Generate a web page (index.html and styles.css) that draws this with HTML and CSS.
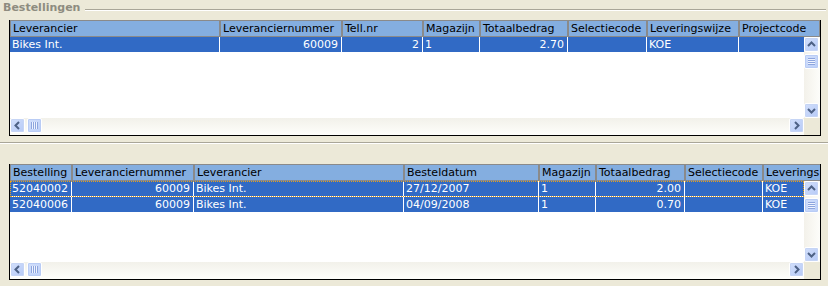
FILE: index.html
```html
<!DOCTYPE html>
<html lang="nl">
<head>
    <meta charset="UTF-8">
    <title>Bestellingen</title>
    <link rel="stylesheet" href="styles.css">
</head>
<body>
    <div class="group-title">
        <span>Bestellingen</span>
        <i class="rule"></i>
    </div>

    <div class="grid grid-top">
        <div class="head">
            <div class="hc">Leverancier</div>
            <div class="hc">Leveranciernummer</div>
            <div class="hc">Tell.nr</div>
            <div class="hc">Magazijn</div>
            <div class="hc">Totaalbedrag</div>
            <div class="hc">Selectiecode</div>
            <div class="hc">Leveringswijze</div>
            <div class="hc">Projectcode</div>
        </div>
        <div class="body">
            <div class="rows">
                <div class="row sel">
                    <div class="c">Bikes Int.</div>
                    <div class="c num">60009</div>
                    <div class="c num">2</div>
                    <div class="c">1</div>
                    <div class="c num">2.70</div>
                    <div class="c"></div>
                    <div class="c">KOE</div>
                    <div class="c"></div>
                </div>
            </div>
            <div class="vscroll">
                <div class="sbtn"><svg width="15" height="15"><polyline points="4,9 7.5,5.5 11,9" /></svg></div>
                <div class="vthumb"><i></i></div>
                <div class="fill"></div>
                <div class="sbtn"><svg width="15" height="15"><polyline points="4,6 7.5,9.5 11,6" /></svg></div>
            </div>
            <div class="hscroll">
                <div class="sbtn"><svg width="15" height="15"><polyline points="9,4 5.5,7.5 9,11" /></svg></div>
                <div class="hthumb"><i></i></div>
                <div class="fill"></div>
                <div class="sbtn"><svg width="15" height="15"><polyline points="6,4 9.5,7.5 6,11" /></svg></div>
            </div>
            <div class="corner"></div>
        </div>
    </div>

    <div class="split"></div>

    <div class="grid grid-bottom">
        <div class="head">
            <div class="hc">Bestelling</div>
            <div class="hc">Leveranciernummer</div>
            <div class="hc">Leverancier</div>
            <div class="hc">Besteldatum</div>
            <div class="hc">Magazijn</div>
            <div class="hc">Totaalbedrag</div>
            <div class="hc">Selectiecode</div>
            <div class="hc">Leverings</div>
        </div>
        <div class="body">
            <div class="rows">
                <div class="row sel focus">
                    <div class="c">52040002</div>
                    <div class="c num">60009</div>
                    <div class="c">Bikes Int.</div>
                    <div class="c">27/12/2007</div>
                    <div class="c">1</div>
                    <div class="c num">2.00</div>
                    <div class="c"></div>
                    <div class="c">KOE</div>
                </div>
                <div class="row sel">
                    <div class="c">52040006</div>
                    <div class="c num">60009</div>
                    <div class="c">Bikes Int.</div>
                    <div class="c">04/09/2008</div>
                    <div class="c">1</div>
                    <div class="c num">0.70</div>
                    <div class="c"></div>
                    <div class="c">KOE</div>
                </div>
            </div>
            <div class="vscroll">
                <div class="sbtn"><svg width="15" height="15"><polyline points="4,9 7.5,5.5 11,9" /></svg></div>
                <div class="vthumb"><i></i></div>
                <div class="fill"></div>
                <div class="sbtn"><svg width="15" height="15"><polyline points="4,6 7.5,9.5 11,6" /></svg></div>
            </div>
            <div class="hscroll">
                <div class="sbtn"><svg width="15" height="15"><polyline points="9,4 5.5,7.5 9,11" /></svg></div>
                <div class="hthumb"><i></i></div>
                <div class="fill"></div>
                <div class="sbtn"><svg width="15" height="15"><polyline points="6,4 9.5,7.5 6,11" /></svg></div>
            </div>
            <div class="corner"></div>
        </div>
    </div>
</body>
</html>
```

FILE: styles.css
```css
body {
    margin: 0;
    background-color: #ECE9D8;
    font-family: "DejaVu Sans", Verdana, sans-serif;
    font-size: 11px;
    color: #000;
}
.group-title {
    display: flex;
    height: 20px;
}
.group-title span {
    padding: 1px 0 0 3px;
    font-weight: bold;
    color: #8E8C80;
    line-height: 13px;
}
.group-title .rule {
    flex: 1;
    margin: 9px 2px 0 5px;
    height: 0;
    border-top: 1px solid #A9A698;
    border-bottom: 1px solid #fff;
}
.grid {
    margin-left: 9px;
    width: 812px;
    height: 116px;
    box-sizing: border-box;
    border: 1px solid #000;
    border-top: none;
    background-color: #fff;
    overflow: hidden;
    display: flex;
    flex-direction: column;
}
.head, .row {
    display: grid;
    flex-shrink: 0;
}
.grid-top .head, .grid-top .row {
    grid-template-columns: 210px 122px 81px 57px 88px 79px 92px 81px;
}
.grid-bottom .head, .grid-bottom .row {
    grid-template-columns: 62px 122px 210px 135px 57px 89px 78px 90px;
}
.head {
    height: 17px;
    background-color: #fff;
}
.hc {
    background-color: #84AEE0;
    border: 1px solid #8A8A8A;
    padding-left: 2px;
    line-height: 15px;
    white-space: nowrap;
    overflow: hidden;
}
.body {
    flex: 1;
    display: grid;
    grid-template-columns: 1fr 16px;
    grid-template-rows: 1fr 17px;
    min-height: 0;
}
.rows {
    overflow: hidden;
    background-color: #fff;
}
.row {
    height: 16px;
}
.c {
    border-right: 1px solid #fff;
    border-bottom: 1px solid #fff;
    padding: 0 3px 0 2px;
    line-height: 15px;
    white-space: nowrap;
    overflow: hidden;
}
.sel .c {
    background-color: #316AC5;
    color: #fff;
}
.num {
    text-align: right;
}
.focus {
    outline: 1px dotted #E9A21A;
    outline-offset: -1px;
}
.vscroll {
    display: flex;
    flex-direction: column;
    background: linear-gradient(to right, #F3F1EA, #FDFDFA);
}
.hscroll {
    display: flex;
    background: linear-gradient(to bottom, #F2F1EA, #FEFEFB);
}
.corner {
    background-color: #ECE9D8;
}
.fill {
    flex: 1;
}
.sbtn {
    width: 15px;
    height: 15px;
    flex-shrink: 0;
    box-sizing: border-box;
    border: 1px solid #fff;
    border-radius: 2px;
    background: linear-gradient(135deg, #D2DFFB, #B6CAF7);
    box-shadow: 0 0 0 1px #C6D5F5 inset;
}
.sbtn svg {
    display: block;
    margin: -1px;
}
.sbtn polyline {
    fill: none;
    stroke: #4D6185;
    stroke-width: 2;
}
.vthumb, .hthumb {
    flex-shrink: 0;
    box-sizing: border-box;
    border: 1px solid #fff;
    border-radius: 2px;
    background: linear-gradient(135deg, #D2DFFB, #BCCFF8);
    box-shadow: 0 0 0 1px #B9CCF5 inset;
    display: flex;
    align-items: center;
    justify-content: center;
}
.vthumb {
    width: 15px;
    height: 15px;
    margin-top: 2px;
}
.hthumb {
    width: 15px;
    height: 15px;
    margin-left: 2px;
}
.vthumb i {
    width: 7px;
    height: 7px;
    background: repeating-linear-gradient(to bottom, #8DA5DE 0, #8DA5DE 1px, #EEF3FE 1px, #EEF3FE 2px);
}
.hthumb i {
    width: 7px;
    height: 7px;
    background: repeating-linear-gradient(to right, #8DA5DE 0, #8DA5DE 1px, #EEF3FE 1px, #EEF3FE 2px);
}
.split {
    margin-top: 6px;
    height: 0;
    border-top: 1px solid #A9A698;
    border-bottom: 1px solid #fff;
}
.grid-bottom {
    margin-top: 20px;
}
```
